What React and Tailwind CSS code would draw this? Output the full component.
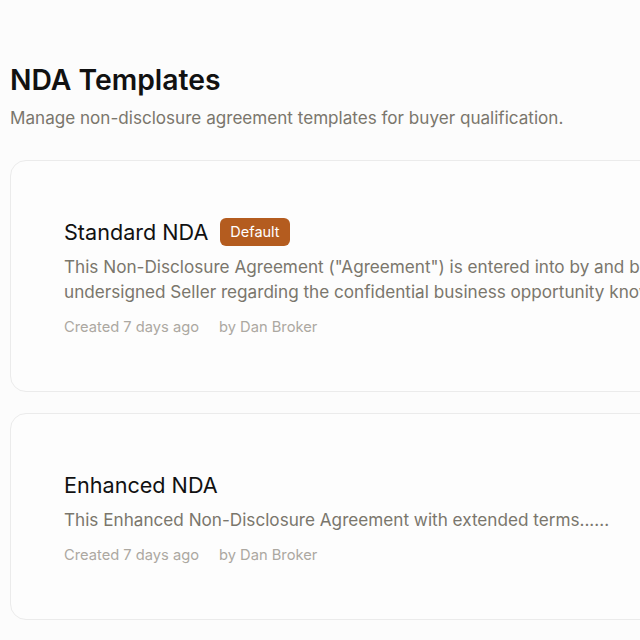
import React from "react";

const templates = [
  {
    id: 1,
    nombre: "Standard NDA",
    esDefault: true,
    lineas: [
      'This Non-Disclosure Agreement ("Agreement") is entered into by and between the',
      "undersigned Seller regarding the confidential business opportunity known as the Business.",
    ],
    creado: "Created 7 days ago",
    autor: "by Dan Broker",
  },
  {
    id: 2,
    nombre: "Enhanced NDA",
    esDefault: false,
    lineas: ["This Enhanced Non-Disclosure Agreement with extended terms......"],
    creado: "Created 7 days ago",
    autor: "by Dan Broker",
  },
];

const TemplateCard = ({ t }) => (
  <div className="w-[760px] rounded-2xl border border-[#ebebeb] bg-[#fdfdfd] pl-[53px] pt-[57px] pb-[54px]">
    <div className="flex items-center gap-3 h-7">
      <h2 className="text-[21.6px] leading-7 text-[#111111]">{t.nombre}</h2>
      {t.esDefault && (
        <span className="rounded-md bg-[#b45c1f] px-2.5 py-1 text-[14.5px] leading-5 text-white">
          Default
        </span>
      )}
    </div>
    <div className="mt-2 text-[17.15px] leading-[25px] text-[#7a766c]">
      {t.lineas.map((l, i) => (
        <p key={i} className="whitespace-nowrap">
          {l}
        </p>
      ))}
    </div>
    <div className="mt-[13px] flex gap-5 text-[14.7px] leading-5 text-[#aca8a1]">
      <span>{t.creado}</span>
      <span>{t.autor}</span>
    </div>
  </div>
);

export default function App() {
  return (
    <div
      className="h-[640px] w-full overflow-hidden bg-[#fcfcfc] pl-[10px] pt-[62px]"
      style={{ fontFamily: "Inter, 'Noto Sans', sans-serif" }}
    >
      <h1 className="text-[28.3px] leading-9 font-semibold text-[#111111]">NDA Templates</h1>
      <p className="mt-2 text-[17.1px] leading-6 text-[#7a766c]">
        Manage non-disclosure agreement templates for buyer qualification.
      </p>
      <div className="mt-[30px] flex flex-col gap-[21px]">
        {templates.map((t) => (
          <TemplateCard key={t.id} t={t} />
        ))}
      </div>
    </div>
  );
}
